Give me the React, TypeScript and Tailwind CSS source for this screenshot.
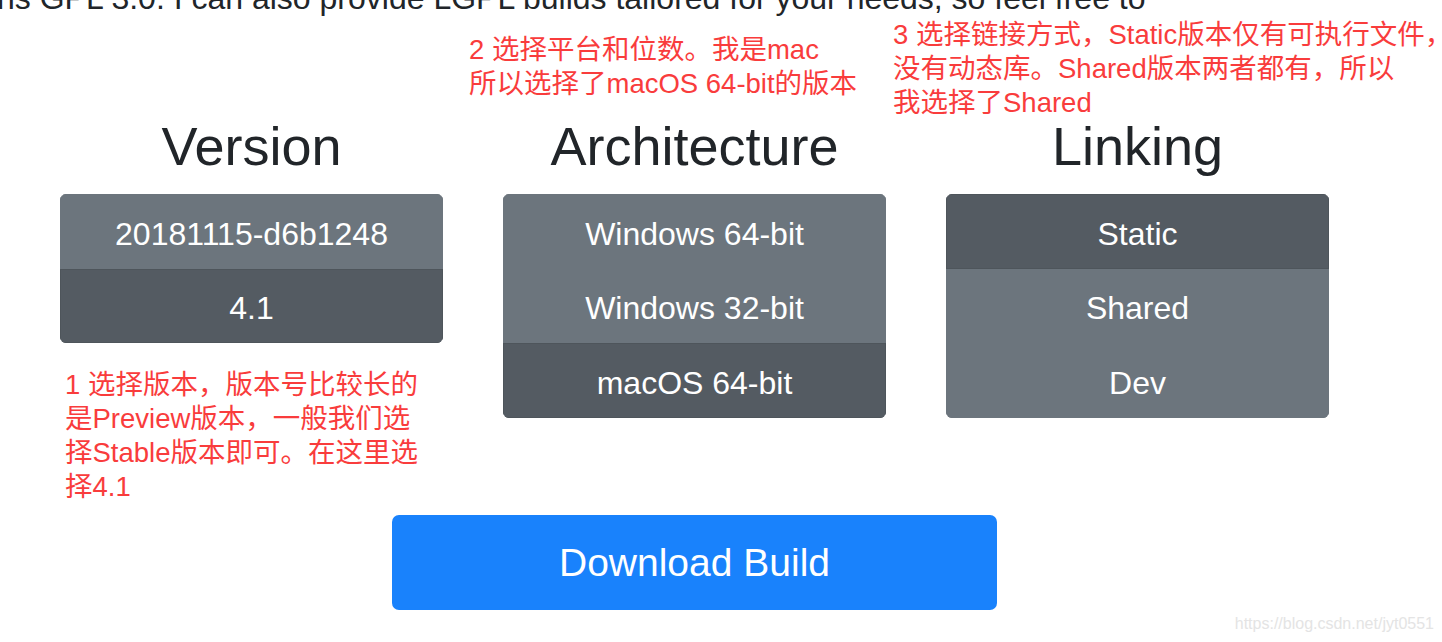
const COLUMNS = [
  {
    title: "Version",
    options: [
      { label: "20181115-d6b1248", active: false },
      { label: "4.1", active: true },
    ],
  },
  {
    title: "Architecture",
    options: [
      { label: "Windows 64-bit", active: false },
      { label: "Windows 32-bit", active: false },
      { label: "macOS 64-bit", active: true },
    ],
  },
  {
    title: "Linking",
    options: [
      { label: "Static", active: true },
      { label: "Shared", active: false },
      { label: "Dev", active: false },
    ],
  },
];

const NOTE =
  "absolute whitespace-nowrap text-[27.5px] leading-[34px] text-[#f93c3c] [font-family:'Liberation_Sans','Noto_Sans_CJK_SC',sans-serif]";

export default function App() {
  return (
    <div className="relative w-[1442px] h-[642px] overflow-hidden bg-white text-[#212529] [font-family:'Liberation_Sans',Arial,sans-serif]">
      {/* Cut-off paragraph at the very top */}
      <div className="h-[18px] overflow-hidden">
        <p className="-mt-[18px] -ml-[3px] whitespace-nowrap text-[32px] leading-[32px]">
          ns GPL 3.0. I can also provide LGPL builds tailored for your needs, so feel free to
        </p>
      </div>

      {/* Selector columns */}
      <div className="mt-[96px] flex gap-[60px] pl-[60px]">
        {COLUMNS.map((col) => (
          <div key={col.title} className="flex w-[383px] flex-col items-center">
            <h1 className="h-[64px] text-[54px] leading-[64px] font-medium">{col.title}</h1>
            <div className="mt-[16px] flex w-full flex-col overflow-hidden rounded-[6px]">
              {col.options.map((opt) => (
                <button
                  key={opt.label}
                  className={`flex h-[74.5px] items-center justify-center border pt-[5px] text-[32px] text-white ${
                    opt.active
                      ? "border-[#4e555b] bg-[#545b62]"
                      : "border-[#6c757d] bg-[#6c757d]"
                  }`}
                >
                  {opt.label}
                </button>
              ))}
            </div>
          </div>
        ))}
      </div>

      {/* Download */}
      <button className="mt-[97px] ml-[392px] flex h-[95px] w-[605px] items-center justify-center rounded-[7px] bg-[#1982fc] pt-[2px] text-[39px] text-white">
        Download Build
      </button>

      {/* Red annotations drawn over the screenshot */}
      <div className={`${NOTE} left-[469px] top-[33px]`}>
        2 选择平台和位数。我是mac
        <br />
        所以选择了macOS 64-bit的版本
      </div>
      <div className={`${NOTE} left-[893px] top-[18px]`}>
        3 选择链接方式，Static版本仅有可执行文件，
        <br />
        没有动态库。Shared版本两者都有，所以
        <br />
        我选择了Shared
      </div>
      <div className={`${NOTE} left-[65px] top-[368px]`}>
        1 选择版本，版本号比较长的
        <br />
        是Preview版本，一般我们选
        <br />
        择Stable版本即可。在这里选
        <br />
        择4.1
      </div>

      {/* Watermark */}
      <div className="absolute right-[8px] bottom-[8px] text-[16px] leading-[20px] text-[#e4e4e4]">
        https://blog.csdn.net/jyt0551
      </div>
    </div>
  );
}
